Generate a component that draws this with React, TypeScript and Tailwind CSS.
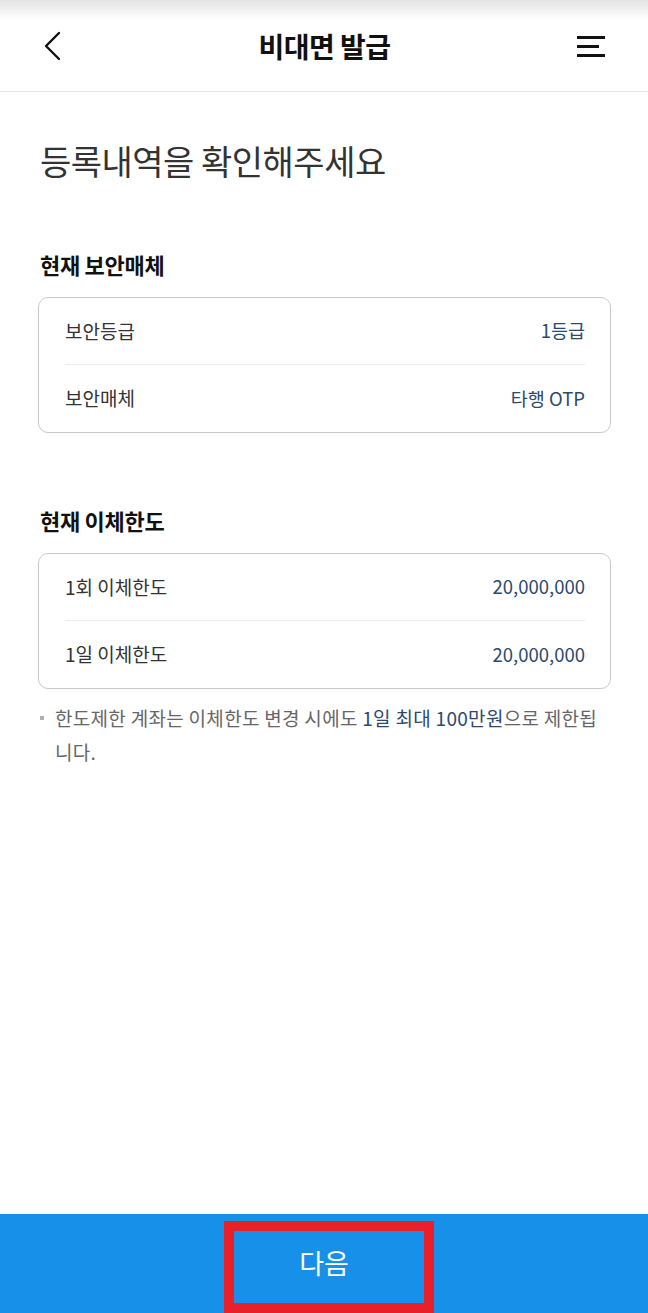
import type { ReactNode } from 'react'

const font = { fontFamily: '"Noto Sans CJK KR", "Noto Sans", sans-serif' }

function Row({ label, value, last }: { label: string; value: string; last?: boolean }) {
  return (
    <div className={`flex h-[67px] items-center justify-between ${last ? '' : 'border-b border-[#ececec]'}`}>
      <span className="text-[19px] text-[#333]">{label}</span>
      <span className="text-[18.5px] text-[#2c4a6e]">{value}</span>
    </div>
  )
}

function Section({ title, children, className }: { title: string; children: ReactNode; className?: string }) {
  return (
    <section className={className}>
      <h3 className="pl-[2px] text-[22px] leading-[30px] font-bold tracking-[-0.3px] text-[#111]">{title}</h3>
      <div className="mt-[18px] rounded-[10px] border border-[#c9c9c9] pr-[25px] pl-[26px]">{children}</div>
    </section>
  )
}

export default function App() {
  return (
    <div style={font} className="relative flex h-[1313px] w-full flex-col overflow-hidden bg-white">
      <header className="grid h-[92px] grid-cols-[1fr_auto_1fr] items-center border-b border-[#e6e6e6] bg-[linear-gradient(to_bottom,#e4e4e4,#ffffff_20px)] pr-[43px] pl-[44px]">
        <button className="justify-self-start">
          <svg width="18" height="30" viewBox="0 0 18 30" fill="none">
            <polyline points="15,2 2,15 15,28" stroke="#111" strokeWidth="2.4" strokeLinecap="round" strokeLinejoin="round" />
          </svg>
        </button>
        <h1 className="text-[28px] font-bold tracking-[-0.5px] text-[#111]">비대면 발급</h1>
        <button className="justify-self-end">
          <svg width="28" height="22" viewBox="0 0 28 22" fill="none">
            <rect x="0" y="1" width="28" height="3" fill="#111" />
            <rect x="0" y="10" width="22" height="3" fill="#111" />
            <rect x="0" y="19" width="28" height="3" fill="#111" />
          </svg>
        </button>
      </header>

      <main className="pr-[37px] pl-[38px]">
        <h2 className="mt-[46px] pl-[2px] text-[34px] leading-[46px] font-normal tracking-[-0.5px] text-[#333]">
          등록내역을 확인해주세요
        </h2>

        <Section title="현재 보안매체" className="mt-[65px]">
          <Row label="보안등급" value="1등급" />
          <Row label="보안매체" value="타행 OTP" last />
        </Section>

        <Section title="현재 이체한도" className="mt-[72px]">
          <Row label="1회 이체한도" value="20,000,000" />
          <Row label="1일 이체한도" value="20,000,000" last />
        </Section>

        <div className="mt-[12px] flex items-start gap-[11px] pr-[4px] pl-[2px]">
          <span className="mt-[15px] h-[4px] w-[4px] shrink-0 bg-[#b0b0b0]" />
          <p className="text-[19px] leading-[34px] tracking-[0.3px] text-[#666]">
            한도제한 계좌는 이체한도 변경 시에도 <span className="text-[#2c4a6e]">1일 최대 100만원</span>으로 제한됩니다.
          </p>
        </div>
      </main>

      <footer className="relative mt-auto flex h-[99px] items-center justify-center bg-[#1790ea]">
        <span className="text-[27px] text-white">다음</span>
        <div className="absolute top-[7px] left-[224px] h-[92px] w-[210px] border-[10px] border-[#e8202a]" />
      </footer>
    </div>
  )
}
